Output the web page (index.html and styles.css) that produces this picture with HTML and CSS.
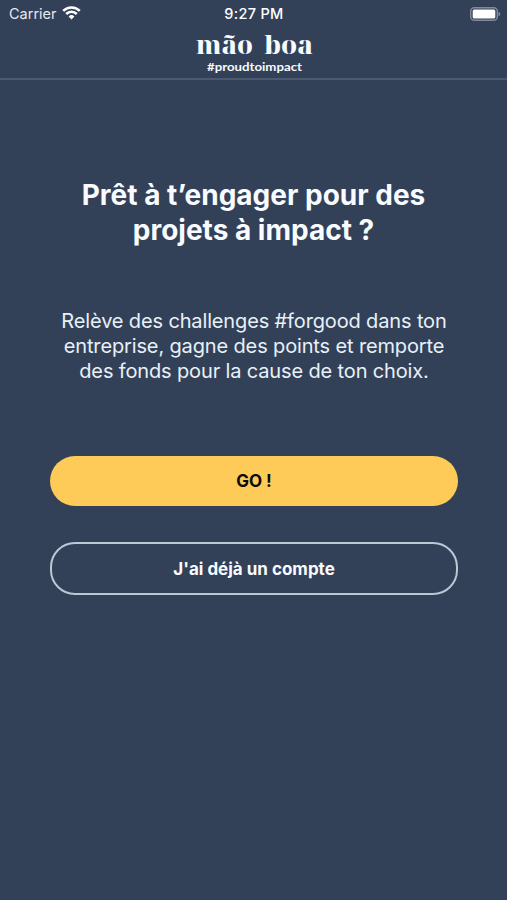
FILE: index.html
```html
<!DOCTYPE html>
<html lang="fr">
<head>
    <meta charset="UTF-8">
    <meta name="viewport" content="width=device-width, initial-scale=1.0">
    <title>mão boa</title>
    <link rel="stylesheet" href="styles.css">
</head>
<body>
    <div class="status-bar">
        <div class="carrier">
            <span>Carrier</span>
            <svg class="wifi" viewBox="0 0 19 14" width="19" height="14">
                <path d="M1.2 4.9a11.7 11.7 0 0 1 16.6 0M4.2 8a7.6 7.6 0 0 1 10.6 0" fill="none" stroke="#fff" stroke-width="2.5"/>
                <path d="M6.6 10.5a4.2 4.2 0 0 1 5.8 0L9.5 13.6z" fill="#fff"/>
            </svg>
        </div>
        <div class="time">9:27 PM</div>
        <svg class="battery" viewBox="0 0 31 14" width="31" height="14">
            <rect x="0.7" y="0.7" width="26.6" height="12.6" rx="3.5" fill="none" stroke="#818b9a" stroke-width="1.4"/>
            <rect x="2.7" y="2.5" width="22.6" height="9" rx="1.5" fill="#fff"/>
            <path d="M28.5 4.8c2.4 .8 2.4 3.6 0 4.4z" fill="#818b9a"/>
        </svg>
    </div>

    <header class="header">
        <svg class="logo" viewBox="0 0 120 46" width="120" height="46">
            <text class="logo-name" x="2" y="24.5" textLength="57" lengthAdjust="spacingAndGlyphs">mão</text>
            <text class="logo-name" x="70" y="24.5" textLength="49" lengthAdjust="spacingAndGlyphs">boa</text>
            <text class="logo-tag" x="13" y="41.5" textLength="95" lengthAdjust="spacingAndGlyphs">#proudtoimpact</text>
        </svg>
    </header>

    <main class="content">
        <h1>Prêt à t’engager pour des<br>projets à impact ?</h1>
        <p>Relève des challenges #forgood dans ton<br>entreprise, gagne des points et remporte<br>des fonds pour la cause de ton choix.</p>
        <button class="btn btn-primary">GO !</button>
        <button class="btn btn-outline">J'ai déjà un compte</button>
    </main>
</body>
</html>
```
FILE: styles.css
```css
* {
    box-sizing: border-box;
}
body {
    margin: 0;
    min-height: 900px;
    background-color: #334158;
    color: #fff;
    font-family: Inter, 'Liberation Sans', sans-serif;
}
.status-bar {
    display: grid;
    grid-template-columns: 1fr auto 1fr;
    align-items: center;
    height: 27px;
    padding: 0 6px 0 9px;
    font-size: 14.5px;
}
.carrier {
    display: flex;
    align-items: center;
    gap: 5px;
    color: #e3e8ef;
}
.wifi {
    margin-top: -2px;
}
.time {
    margin-left: -2px;
    font-weight: 500;
    font-size: 14.5px;
    letter-spacing: 0.3px;
}
.battery {
    justify-self: end;
}
.header {
    display: flex;
    justify-content: center;
    height: 53px;
    padding-top: 2px;
    border-bottom: 2px solid #4b5a70;
}
.logo {
    fill: #f6fbff;
    overflow: visible;
}
.logo-name {
    font-family: 'Noto Serif Display', 'DejaVu Serif', serif;
    font-size: 25.5px;
    font-weight: 800;
}
.logo-tag {
    font-family: Lato, sans-serif;
    font-size: 12px;
    font-weight: bold;
}
.content {
    padding: 98px 49px 0 50px;
    text-align: center;
}
h1 {
    margin: 0 1px 0 0;
    font-size: 28px;
    line-height: 35px;
    font-weight: 700;
    color: #f8fbff;
}
p {
    margin: 61px -10px 72px;
    font-size: 20px;
    line-height: 25px;
    letter-spacing: -0.14px;
    color: #e8f1f8;
}
.btn {
    display: block;
    width: 100%;
    padding: 0;
    border: none;
    border-radius: 25px;
    font-family: inherit;
    font-size: 17px;
    font-weight: 700;
}
.btn-primary {
    height: 50px;
    background-color: #fecb58;
    color: #0b0b0b;
}
.btn-outline {
    height: 53px;
    margin-top: 36px;
    border: 2px solid #b9c9d6;
    background: none;
    color: #f8fbff;
}
```
